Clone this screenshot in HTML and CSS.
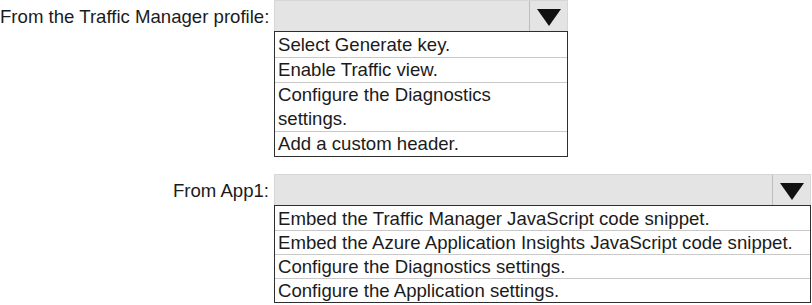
FILE: index.html
```html
<!DOCTYPE html>
<html>
<head>
<meta charset="utf-8">
<link rel="stylesheet" href="styles.css">
</head>
<body>
<div class="form">
  <div class="row">
    <div class="label">From the Traffic Manager profile:</div>
    <div class="dropdown dd-small">
      <div class="select">
        <span class="value"></span>
        <span class="arrow"><svg width="24" height="17" viewBox="0 0 24 17"><polygon points="0,0 24,0 12,17" fill="#111"/></svg></span>
      </div>
      <ul class="options">
        <li>Select Generate key.</li>
        <li>Enable Traffic view.</li>
        <li>Configure the Diagnostics<br>settings.</li>
        <li>Add a custom header.</li>
      </ul>
    </div>
  </div>
  <div class="row">
    <div class="label">From App1:</div>
    <div class="dropdown dd-wide">
      <div class="select">
        <span class="value"></span>
        <span class="arrow"><svg width="24" height="17" viewBox="0 0 24 17"><polygon points="0,0 24,0 12,17" fill="#111"/></svg></span>
      </div>
      <ul class="options">
        <li>Embed the Traffic Manager JavaScript code snippet.</li>
        <li>Embed the Azure Application Insights JavaScript code snippet.</li>
        <li>Configure the Diagnostics settings.</li>
        <li>Configure the Application settings.</li>
      </ul>
    </div>
  </div>
</div>
</body>
</html>
```

FILE: styles.css
```css
html, body {
  margin: 0;
  padding: 0;
  background: #ffffff;
}

body {
  font-family: "Liberation Sans", Arial, sans-serif;
  font-size: 18.6px;
  color: #1b1b1b;
}

.form {
  display: flex;
  flex-direction: column;
  gap: 17px;
}

.row {
  display: grid;
  grid-template-columns: 274px auto;
  align-items: start;
}

.label {
  text-align: right;
  padding-right: 5px;
  height: 31px;
  line-height: 33px;
  white-space: nowrap;
}

.dropdown {
  display: flex;
  flex-direction: column;
}

.dd-small { width: 294px; }
.dd-wide { width: 537px; }

.select {
  display: flex;
  height: 31px;
  background: #e4e4e4;
  box-sizing: border-box;
  border: 1px solid #d6d6d6;
  border-bottom: none;
}

.value {
  flex: 1;
}

.arrow {
  width: 38px;
  border-left: 1px solid #bdbdbd;
  display: flex;
  align-items: center;
  justify-content: center;
  padding-top: 3px;
  box-sizing: border-box;
}

.options {
  list-style: none;
  margin: 0;
  padding: 0;
  border: 1px solid #2e2e2e;
  background: #fff;
}

.options li {
  line-height: 23px;
  padding: 0 3px;
  border-top: 1px solid #c9c9c9;
  white-space: nowrap;
}

.dd-small .options li {
  line-height: 24px;
}

.options li:first-child {
  border-top: none;
  padding-top: 1px;
}
```
